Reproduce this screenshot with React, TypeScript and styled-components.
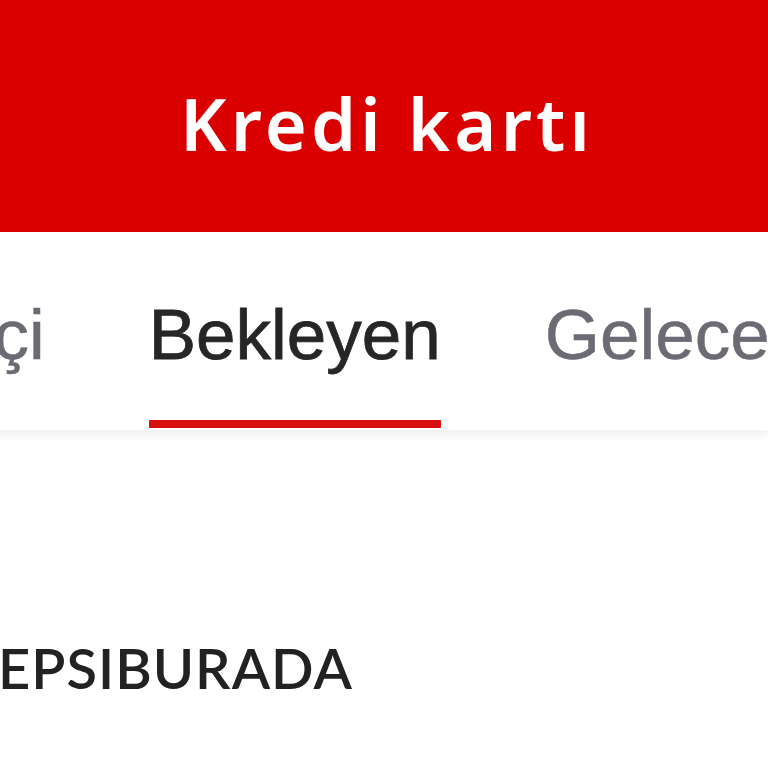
import React from "react";
import styled, { createGlobalStyle } from "styled-components";

const Global = createGlobalStyle`
  html, body { margin: 0; padding: 0; background: #ffffff; }
  body { width: 768px; height: 768px; overflow: hidden; }
  #root { width: 768px; height: 768px; overflow: hidden; }
`;

const Screen = styled.div`
  width: 768px;
  height: 768px;
  display: flex;
  flex-direction: column;
  background: #ffffff;
  overflow: hidden;
`;

const Header = styled.header`
  height: 232px;
  flex: 0 0 232px;
  background: #db0000;
  display: flex;
  align-items: center;
  justify-content: center;
  padding-top: 14px;
  padding-left: 6px;
  box-sizing: border-box;
`;

const Title = styled.h1`
  margin: 0;
  font-family: "Noto Sans", "Lato", sans-serif;
  font-weight: 600;
  font-size: 72px;
  color: #ffffff;
  letter-spacing: 4.2px;
`;

const TabBar = styled.nav`
  flex: 0 0 198px;
  height: 198px;
  display: flex;
  align-items: flex-end;
  gap: 104px;
  margin-left: -271px;
  box-shadow: 0 4px 10px rgba(0, 0, 0, 0.07);
  position: relative;
  z-index: 1;
  white-space: nowrap;
`;

const Tab = styled.div<{ $active?: boolean }>`
  flex: 0 0 auto;
  display: flex;
  flex-direction: column;
  align-items: stretch;
  font-family: "Liberation Sans", Arial, sans-serif;
  font-size: 71px;
  font-weight: 400;
  color: ${(p) => (p.$active ? "#262626" : "#6b6b74")};
  -webkit-text-stroke: ${(p) => (p.$active ? "0.8px #262626" : "0.5px #6b6b74")};
  line-height: 1;
`;

const TabLabel = styled.span`
  padding-bottom: 50px;
`;

const Indicator = styled.span<{ $active?: boolean }>`
  height: 8px;
  border-radius: 1px;
  background: ${(p) => (p.$active ? "#d90f0f" : "transparent")};
  margin-bottom: 2px;
`;

const Body = styled.main`
  flex: 1;
  display: flex;
  flex-direction: column;
  padding-top: 204px;
`;

const Merchant = styled.div`
  margin-left: -46px;
  font-family: "Lato", "Noto Sans", sans-serif;
  font-weight: 600;
  font-size: 56px;
  letter-spacing: 1px;
  color: #222222;
  white-space: nowrap;
`;

export default function App() {
  return (
    <>
      <Global />
      <Screen>
        <Header>
          <Title>Kredi kartı</Title>
        </Header>
        <TabBar>
          <Tab>
            <TabLabel>Dönem içi</TabLabel>
            <Indicator />
          </Tab>
          <Tab $active>
            <TabLabel>Bekleyen</TabLabel>
            <Indicator $active />
          </Tab>
          <Tab>
            <TabLabel>Gelecek dönem</TabLabel>
            <Indicator />
          </Tab>
        </TabBar>
        <Body>
          <Merchant>HEPSIBURADA</Merchant>
        </Body>
      </Screen>
    </>
  );
}
